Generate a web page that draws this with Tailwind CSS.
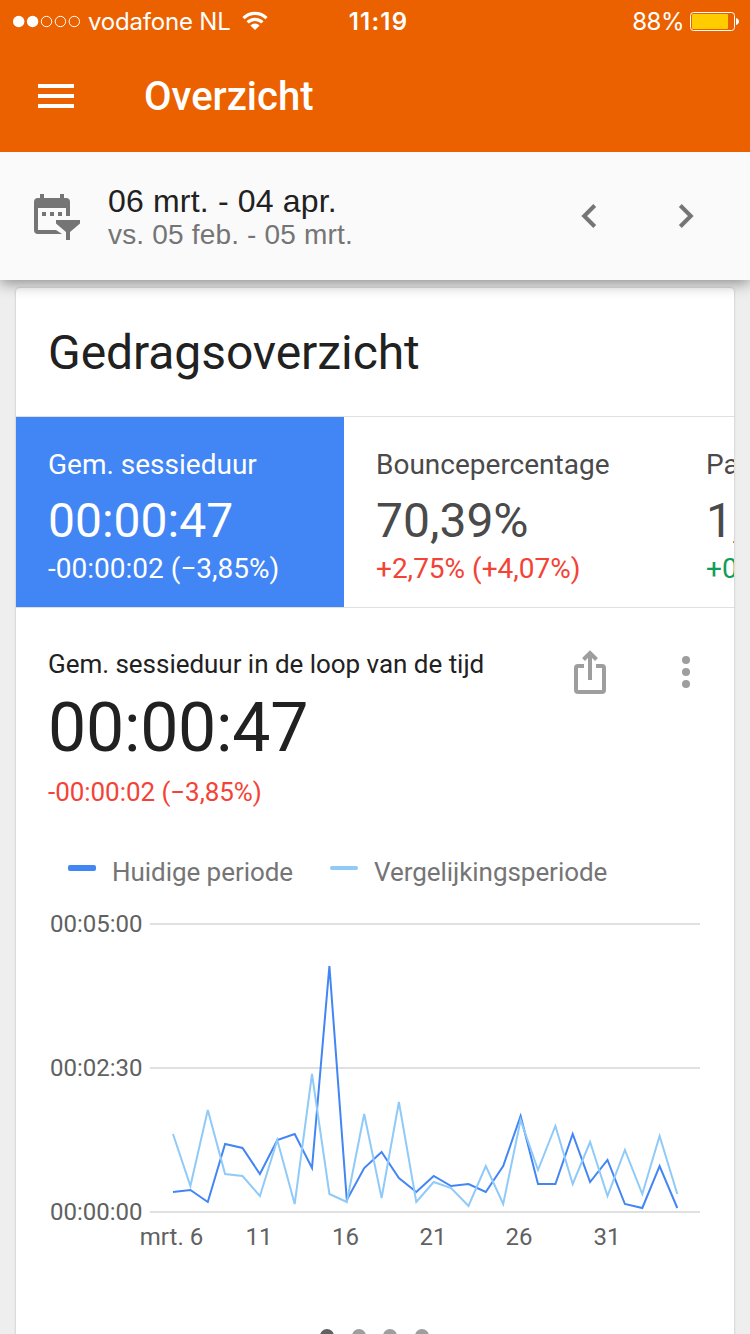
<!DOCTYPE html>
<html lang="nl">
<head>
<meta charset="utf-8">
<title>Overzicht</title>
<script src="https://cdn.jsdelivr.net/npm/@tailwindcss/browser@4"></script>
</head>
<body class="w-[750px] h-[1334px] overflow-hidden bg-[#eeeeee] font-['Roboto',sans-serif] flex flex-col">

<header class="relative z-10 shrink-0 shadow-[0_3px_14px_rgba(0,0,0,0.42)]">
  <div class="bg-[#eb6100] text-white h-[152px]">
    <div class="h-10 grid grid-cols-3 items-center pl-[13px] pr-[10px] font-['Inter',sans-serif] text-2xl leading-10">
      <div class="flex items-center">
        <svg class="w-[69px] h-[14px] shrink-0" viewBox="0 0 69 14" fill="none" stroke="#fff">
          <circle cx="5.7" cy="7.5" r="5.7" fill="#fff" stroke="none"/>
          <circle cx="19.6" cy="7.5" r="5.7" fill="#fff" stroke="none"/>
          <circle cx="33.5" cy="7.5" r="5.2"/><circle cx="47.4" cy="7.5" r="5.2"/><circle cx="61.3" cy="7.5" r="5.2"/>
        </svg>
        <span class="ml-[6px] pt-[2px] whitespace-nowrap w-[142px] tracking-[-0.2px]">vodafone NL</span>
        <svg class="ml-[12px] w-[26px] h-[20px] shrink-0" viewBox="0 0 26 20" fill="none" stroke="#fff" stroke-width="3.2">
          <path d="M1.5 7.2a16.2 16.2 0 0 1 23 0M5.6 11.4a10.5 10.5 0 0 1 14.8 0"/>
          <path d="M13 19l-4.6-4.6a6.5 6.5 0 0 1 9.2 0z" fill="#fff" stroke="none"/>
        </svg>
      </div>
      <div class="text-center font-semibold pt-[2px] pl-1 tracking-[1.2px]">11:19</div>
      <div class="flex items-center justify-end">
        <span class="mr-[6px] pt-[2px] tracking-[-0.5px]">88%</span>
        <svg class="w-[50px] h-[20px]" viewBox="0 0 50 20">
          <rect x=".5" y="1.5" width="44" height="18" rx="3" fill="none" stroke="#fff"/>
          <rect x="2" y="3" width="36" height="15" rx="1.2" fill="#ffcc00"/>
          <path d="M46 7c1.700.5 3 1.800 3 3.500s-1.300 3-3 3.500z" fill="#fff"/>
        </svg>
      </div>
    </div>
    <div class="h-[112px] flex items-center pl-[38px]">
      <div class="w-[36px] flex flex-col gap-[6px]">
        <div class="h-1 bg-white"></div><div class="h-1 bg-white"></div><div class="h-1 bg-white"></div>
      </div>
      <h1 class="ml-[70px] pt-[2px] text-[40px] leading-[48px] font-medium">Overzicht</h1>
    </div>
  </div>
  <div class="h-32 bg-[#fafafa] flex items-center">
    <svg class="ml-[34px] mt-[2px] w-[46px] h-[46px] shrink-0" viewBox="0 0 46 46" fill="#757575">
      <path fill-rule="evenodd" d="M6 0h4v4h16V0h4v4h2a4 4 0 0 1 4 4v14h-4v-8H4v22h18l6 4H4a4 4 0 0 1-4-4V8a4 4 0 0 1 4-4h2z"/>
      <path d="M8 18h4v4H8zM16 18h4v4h-4zM24 18h4v4h-4zM22 26h24v3.500l-10 8.500V46h-4v-8l-10-8.500z"/>
    </svg>
    <div class="ml-7 pt-1 w-[300px] font-['Liberation_Sans',sans-serif] whitespace-nowrap">
      <div class="text-[32px] leading-[34px] tracking-[0.18px] text-[#212121]">06 mrt. - 04 apr.</div>
      <div class="text-[28px] leading-[34px] tracking-[0.18px] text-[#757575]">vs. 05 feb. - 05 mrt.</div>
    </div>
    <svg class="ml-[173px] w-[16px] h-[24px]" viewBox="0 0 16 24" fill="none" stroke="#757575" stroke-width="4"><path d="M13.700 1.500L3.200 12l10.500 10.500"/></svg>
    <svg class="ml-[81px] w-[16px] h-[24px]" viewBox="0 0 16 24" fill="none" stroke="#757575" stroke-width="4"><path d="M2.300 1.500L12.800 12 2.300 22.500"/></svg>
  </div>
</header>

<main class="mt-2 mx-4 h-[1100px] bg-white rounded-t-[4px] shadow-[0_0_2px_1px_rgba(0,0,0,0.1)]">
  <div class="h-[129px] border-b border-[#e0e0e0] pl-8 pt-[2px] flex items-center">
    <h2 class="text-5xl leading-[56px] tracking-[-0.07px] text-[#212121]">Gedragsoverzicht</h2>
  </div>
  <div class="h-[191px] border-b border-[#e0e0e0] flex overflow-hidden whitespace-nowrap text-[28px] leading-8">
    <div class="w-[328px] shrink-0 bg-[#4285f4] text-white pl-8 pt-[32px]">
      <div>Gem. sessieduur</div>
      <div class="text-5xl leading-[56px] mt-[12px]">00:00:47</div>
      <div class="mt-1">-00:00:02 (−3,85%)</div>
    </div>
    <div class="w-[330px] shrink-0 text-[#4a4a4a] pl-8 pt-[32px]">
      <div>Bouncepercentage</div>
      <div class="text-5xl leading-[56px] mt-[12px]">70,39%</div>
      <div class="mt-1 text-[#f44336]">+2,75% (+4,07%)</div>
    </div>
    <div class="w-[330px] shrink-0 text-[#4a4a4a] pl-8 pt-[32px]">
      <div>Pagina's/sessie</div>
      <div class="text-5xl leading-[56px] mt-[12px] tracking-[-0.8px]">1,91</div>
      <div class="mt-1 text-[#0f9d58]">+0,05 (+2,69%)</div>
    </div>
  </div>
  <div class="flex h-[240px] pl-8 pt-10">
    <div class="w-[526px] whitespace-nowrap">
      <div class="text-[26px] leading-8 tracking-[-0.03px] text-[#212121]">Gem. sessieduur in de loop van de tijd</div>
      <div class="text-[68px] leading-[80px] mt-[8px] tracking-[-0.25px] text-[#212121]">00:00:47</div>
      <div class="text-[26px] leading-8 mt-[8px] tracking-[-0.05px] text-[#f44336]">-00:00:02 (−3,85%)</div>
    </div>
    <svg class="mt-[2px] w-[32px] h-[44px] overflow-visible" viewBox="0 0 32 44" fill="none" stroke="#9e9e9e" stroke-width="4">
      <path d="M10 16H4a2 2 0 0 0-2 2v22a2 2 0 0 0 2 2h24a2 2 0 0 0 2-2V18a2 2 0 0 0-2-2h-6M16 30V4M9.500 9.500L16 3l6.500 6.500"/>
    </svg>
    <svg class="mt-[8px] ml-[76px] w-[8px] h-[32px] overflow-visible" viewBox="0 0 8 32" fill="#9e9e9e"><circle cx="4" cy="4" r="4"/><circle cx="4" cy="16" r="4"/><circle cx="4" cy="28" r="4"/></svg>
  </div>
  <div class="h-12 flex items-center pl-[52px] text-[26px] leading-8 tracking-[-0.05px] text-[#757575] whitespace-nowrap">
    <div class="w-7 h-[6px] rounded-[2px] bg-[#4285f4] -mt-2"></div>
    <div class="ml-4 w-[218px]">Huidige periode</div>
    <div class="w-7 h-1 rounded-[2px] bg-[#90caf9] -mt-2"></div>
    <div class="ml-4">Vergelijkingsperiode</div>
  </div>
  <svg class="block w-[718px] h-[400px]" viewBox="16 896 718 400">
    <path d="M150 924H700M150 1068H700M150 1212H700" stroke="#e0e0e0" stroke-width="2"/>
    <g fill="#616161" font-size="24">
      <text x="50" y="932">00:05:00</text>
      <text x="50" y="1076">00:02:30</text>
      <text x="50" y="1220">00:00:00</text>
      <g text-anchor="middle">
        <text x="171.500" y="1245">mrt. 6</text><text x="259" y="1245">11</text><text x="345.500" y="1245">16</text>
        <text x="433" y="1245">21</text><text x="519" y="1245">26</text><text x="607" y="1245">31</text>
      </g>
    </g>
    <g fill="none" stroke-width="2">
      <polyline stroke="#4285f4" points="173,1192 190.400,1190 207.800,1202 225.100,1144 242.500,1148 259.900,1174 277.300,1140 294.700,1134 312,1168 329.400,966 346.800,1200 364.200,1168 381.600,1152 398.900,1178 416.300,1192 433.700,1176 451.100,1186 468.500,1184 485.800,1192 503.200,1166 520.600,1116 538,1184 555.400,1184 572.700,1134 590.100,1182 607.500,1160 624.900,1204 642.300,1208 659.600,1166 677.300,1208"/>
      <polyline stroke="#90caf9" points="173,1134 190.400,1186 207.800,1110 225.100,1174 242.500,1176 259.900,1196 277.300,1140 294.700,1204 312,1074 329.400,1194 346.800,1202 364.200,1114 381.600,1198 398.900,1102 416.300,1202 433.700,1182 451.100,1188 468.500,1206 485.800,1166 503.200,1204 520.600,1120 538,1170 555.400,1126 572.700,1184 590.100,1142 607.500,1196 624.900,1150 642.300,1194 659.600,1136 677.300,1194"/>
    </g>
  </svg>
  <div class="flex justify-center gap-[17.500px] pt-[33px] pr-[1.500px]">
    <div class="size-[14px] rounded-full bg-[#616161]"></div>
    <div class="size-[14px] rounded-full bg-[#9e9e9e]"></div>
    <div class="size-[14px] rounded-full bg-[#9e9e9e]"></div>
    <div class="size-[14px] rounded-full bg-[#9e9e9e]"></div>
  </div>
</main>
</body>
</html>
